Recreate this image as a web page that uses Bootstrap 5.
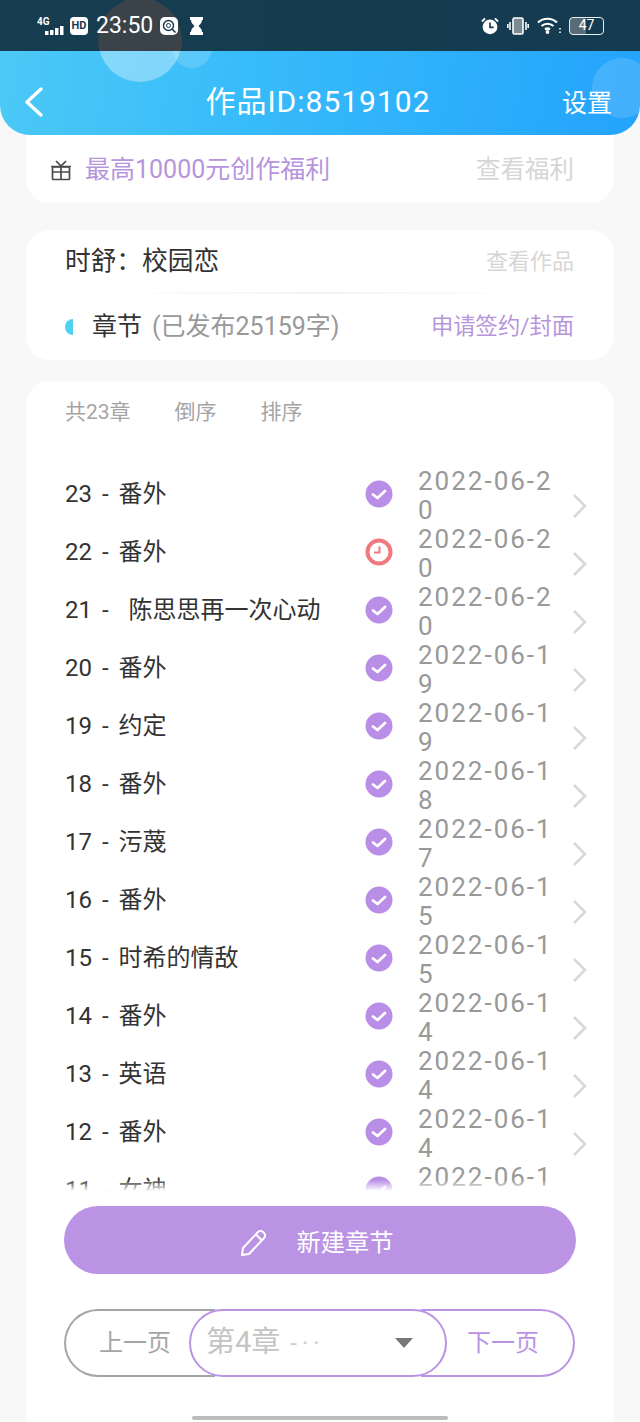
<!DOCTYPE html>
<html lang="zh">

<head>
  <meta charset="UTF-8">
  <meta name="viewport" content="width=device-width, initial-scale=1.0">
  <title>作品详情</title>
  <link href="https://cdn.jsdelivr.net/npm/bootstrap@5.3.3/dist/css/bootstrap.min.css" rel="stylesheet">
  <style>
    body {
      width: 640px;
      height: 1422px;
      overflow: hidden;
      background: #f8f8f8;
      font-family: Roboto, "Noto Sans CJK SC", sans-serif;
    }
    .top-wrap {
      height: 135px;
      overflow: hidden;
      border-radius: 0 0 30px 30px;
      background: linear-gradient(100deg, #4ccaf6 0%, #38bbfa 40%, #24a3fc 100%);
      z-index: 2;
    }
    .bubble {
      position: absolute;
      border-radius: 50%;
      background: rgba(255, 255, 255, .35);
    }
    .bubble-a { left: 98px; top: -2px; width: 84px; height: 84px; }
    .bubble-b { left: 172px; top: 28px; width: 40px; height: 40px; background: rgba(255, 255, 255, .16); }
    .bubble-c { left: 592px; top: 58px; width: 60px; height: 60px; background: rgba(255, 255, 255, .14); }
    .bubble-dim { background: rgba(255, 110, 40, .15); }
    .status-bar {
      height: 51px;
      padding: 0 36px 0 37px;
      overflow: hidden;
      background: rgba(20, 54, 72, .96);
      color: #fff;
    }
    .status-time { font-size: 23px; line-height: 1; margin: 0 3px 0 4px; }
    .hd-tag {
      width: 18px; height: 18px; border-radius: 4px; background: #fff; color: #17384b;
      font-size: 11px; font-weight: 700; line-height: 18px; text-align: center;
    }
    .batt {
      width: 35px; height: 18px; border: 1.5px solid #e8eef2; border-radius: 4px;
      font-size: 14px; line-height: 15px; text-align: center;
      background: linear-gradient(90deg, #5a6b78 47%, transparent 47%);
    }
    .head-bar { height: 84px; padding: 18px 28px 0 24px; color: #fff; }
    .head-side { flex: 0 0 70px; }
    .head-title { font-size: 30px; letter-spacing: 1px; line-height: 1; }
    .head-link { display: block; padding-top: 3px; font-size: 25px; line-height: 1; }
    .page-body { margin-top: -35px; padding: 0 26px; }
    .white-box { background: #fff; border-radius: 24px; }
    .box-gift { height: 103px; padding: 37px 40px 0 24px; }
    .gift-text { color: #b795dc; font-size: 25px; margin-left: 13px; }
    .faint-link { color: #d6d6d6; font-size: 24.500px; }
    .box-info { margin-top: 27px; height: 130px; padding: 0 40px 0 39px; }
    .info-top { height: 62px; }
    .info-name { font-size: 25.700px; color: #333; }
    .faint-small { color: #d6d6d6; font-size: 22px; }
    .info-rule {
      height: 2px; margin: 0 0 0 40px; width: 430px;
      background: linear-gradient(90deg, #fff, #f3f3f3 50%, #fff);
    }
    .half-dot {
      width: 8px; height: 16px; background: #4fd0f0;
      border-radius: 8px 0 0 8px; margin-right: 19px;
    }
    .info-sec { height: 65px; }
    .sec-name { font-size: 25px; color: #333; }
    .sec-count { font-size: 25px; color: #999; margin-left: 10px; }
    .sec-link { color: #b795dc; font-size: 22.300px; }
    .box-list { margin-top: 21px; height: 1060px; padding: 0 38px; border-radius: 24px 24px 0 0; }
    .list-head { height: 62px; padding: 2px 0 0 1px; color: #a5a5a5; font-size: 21px; gap: 44px; }
    .chapter-scroll { margin: 22px -26px 0 1px; height: 728px; overflow: hidden; }
    .chapter-fade {
      left: 0; right: 0; bottom: 0; height: 13px;
      background: linear-gradient(180deg, rgba(255, 255, 255, 0), #fff 85%);
    }
    .chapter-row { height: 58px; }
    .chapter-name { flex: 0 0 300px; font-size: 24px; color: #333; white-space: pre; word-spacing: 4px; }
    .chapter-mark { flex: 0 0 28px; height: 28px; }
    .chapter-date {
      flex: 0 0 140px; margin-left: 25px; padding-top: 4px; color: #999; font-size: 26px; line-height: 29px;
      word-break: break-all; letter-spacing: 2px;
    }
    .chapter-arrow { flex: 0 0 16px; height: 26px; margin: 24px 0 0 14px; }
    .new-btn {
      height: 68px; margin-top: 13px; width: 512px; padding: 6px 6px 0 0; border-radius: 34px; border: 0;
      background: #bb93e4; color: #fff; font-size: 24.300px; gap: 28px;
    }
    .new-btn:hover { background: #bb93e4; color: #fff; }
    .pager { margin-top: 35px; width: 511px; height: 68px; }
    .pager-side { height: 68px; background: #fff; font-size: 24px; border: 2px solid #a5a5a5; }
    .pager-prev { flex: 0 0 151px; border-radius: 34px 0 0 34px; border-right: 0; color: #a5a5a5; padding-left: 33px; }
    .pager-next { flex: 1 1 0; border-radius: 0 34px 34px 0; border-left: 0; color: #bb93e4; border-color: #bb93e4; padding-left: 46px; }
    .pager-pick {
      flex: 0 0 258px; height: 68px; margin: 0 -26px; background: #fff; z-index: 1;
      border: 2px solid #bb93e4; border-radius: 34px; padding: 0 32px 0 15px;
      color: #c4c4c4; font-size: 29px;
    }
    .pick-arrow {
      width: 0; height: 0; border-left: 9px solid transparent; border-right: 9px solid transparent;
      border-top: 10px solid #777;
    }
    .pick-more { font-size: 24px; letter-spacing: 5px; margin-left: 10px; color: #ccc; }
    .home-bar {
      left: 192px; bottom: 2px; width: 256px; height: 4px; border-radius: 2px; background: #bdbdbd;
    }
  </style>
</head>

<body class="position-relative">
  <div class="top-wrap position-relative">
    <span class="bubble bubble-a"></span>
    <span class="bubble bubble-b"></span>
    <span class="bubble bubble-c"></span>

    <div class="status-bar position-relative d-flex align-items-center justify-content-between">
      <span class="bubble bubble-a bubble-dim"></span>
      <div class="position-relative d-flex align-items-center gap-1">
        <svg width="29" height="20" viewBox="0 0 29 20" fill="#fff">
          <text x="0" y="9" font-family="Roboto, sans-serif" font-size="10" font-weight="700">4G</text>
          <rect x="8" y="15" width="3.500" height="4"/><rect x="13" y="14" width="3.500" height="5"/>
          <rect x="18" y="12" width="3.500" height="7"/><rect x="23" y="10" width="3.500" height="9"/>
        </svg>
        <span class="hd-tag">HD</span>
        <span class="status-time">23:50</span>
        <svg width="18" height="18" viewBox="0 0 18 18">
          <rect width="18" height="18" rx="5" fill="#fff"/>
          <circle cx="8.500" cy="8.500" r="5" fill="none" stroke="#17384b" stroke-width="1.400"/>
          <path d="M12 12l3.500 3.500" stroke="#17384b" stroke-width="1.600"/>
          <circle cx="8.500" cy="8.500" r="2" fill="none" stroke="#17384b"/>
        </svg>
        <svg class="ms-2" width="13" height="18" viewBox="0 0 13 18" fill="#fff">
          <path d="M0 0h13v3h-1c0 3-2 4.500-3.500 6C10 10.500 12 12 12 15h1v3H0v-3h1c0-3 2-4.500 3.500-6C3 7.500 1 6 1 3H0z"/>
        </svg>
      </div>
      <div class="d-flex align-items-center gap-1">
        <svg class="me-1" width="18" height="18" viewBox="0 0 20 20">
          <circle cx="10" cy="11" r="8.200" fill="#fff"/>
          <path d="M10 6v5.500h4" fill="none" stroke="#17384b" stroke-width="1.800"/>
          <path d="M1 5l3.500-3.500M19 5l-3.500-3.500" stroke="#fff" stroke-width="2"/>
        </svg>
        <svg class="me-1" width="22" height="18" viewBox="0 0 22 18" fill="none" stroke="#fff" stroke-width="1.600">
          <rect x="6" y="1" width="10" height="16" rx="1.500" fill="#7b8b96"/>
          <path d="M3 5v8M19 5v8M.8 7v4M21.200 7v4"/>
        </svg>
        <svg class="me-1" width="24" height="17" viewBox="0 0 24 17" fill="none" stroke="#fff" stroke-width="2.200">
          <path d="M1 5.500c5.500-5 13.500-5 19 0M4.500 9c3.500-3 8.500-3 12 0M8 12.500c1.500-1.200 3.500-1.200 5 0"/>
          <circle cx="10.500" cy="15" r=".8" fill="#fff"/>
          <path d="M23 11v1.500M23 14.500v1.500" stroke-width="1.600"/>
        </svg>
        <span class="batt">47</span>
      </div>
    </div>

    <div class="head-bar position-relative d-flex align-items-center justify-content-between">
      <div class="head-side">
        <svg class="d-block" width="20" height="32" viewBox="0 0 20 32" fill="none" stroke="#fff" stroke-width="3.400" stroke-linecap="round" stroke-linejoin="round">
          <path d="M17 3L3 16l14 13"/>
        </svg>
      </div>
      <span class="head-title">作品ID:8519102</span>
      <div class="head-side text-end"><span class="head-link">设置</span></div>
    </div>
  </div>

  <div class="page-body">
    <div class="white-box box-gift d-flex align-items-center justify-content-between">
      <div class="d-flex align-items-center">
        <svg width="22" height="22" viewBox="0 0 22 22" fill="none" stroke="#4a4a4a" stroke-width="1.700">
          <rect x="2.500" y="8" width="17" height="12.500" rx="1"/>
          <path d="M1 7.500h20M11 7.500v13M2.500 13h17M6 2l5 5 5-5"/>
        </svg>
        <span class="gift-text">最高10000元创作福利</span>
      </div>
      <span class="faint-link">查看福利</span>
    </div>

    <div class="white-box box-info">
      <div class="info-top d-flex align-items-center justify-content-between">
        <span class="info-name">时舒：校园恋</span>
        <span class="faint-small">查看作品</span>
      </div>
      <div class="info-rule"></div>
      <div class="info-sec d-flex align-items-center justify-content-between">
        <div class="d-flex align-items-center">
          <span class="half-dot"></span>
          <span class="sec-name">章节</span>
          <span class="sec-count">(已发布25159字)</span>
        </div>
        <span class="sec-link">申请签约/封面</span>
      </div>
    </div>

    <div class="white-box box-list">
      <div class="list-head d-flex align-items-center">
        <span>共23章</span><span>倒序</span><span>排序</span>
      </div>
      <div class="chapter-scroll position-relative">
        <div id="chapterList"></div>
        <div class="chapter-fade position-absolute"></div>
      </div>
      <button type="button" class="btn new-btn d-flex align-items-center justify-content-center">
        <svg width="28" height="28" viewBox="0 0 28 28" fill="none" stroke="#fff" stroke-width="2" stroke-linejoin="round">
          <path d="M2 26l1-7L18 3c1.500-1.500 3.500-1.500 5 0l1 1c1.500 1.500 1.500 3.500 0 5L9 25z"/>
          <path d="M16 5.500l6 6"/>
        </svg>
        <span>新建章节</span>
      </button>
      <div class="pager d-flex align-items-center">
        <div class="pager-side pager-prev d-flex align-items-center">上一页</div>
        <div class="pager-pick d-flex align-items-center justify-content-between">
          <span class="d-flex align-items-center">第4章<span class="pick-more">-··</span></span>
          <span class="pick-arrow"></span>
        </div>
        <div class="pager-side pager-next d-flex align-items-center">下一页</div>
      </div>
    </div>
  </div>

  <div class="home-bar position-absolute"></div>

  <script>
    const chapters = [
      ["23 - 番外", "2022-06-20", 1],
      ["22 - 番外", "2022-06-20", 0],
      ["21 -  陈思思再一次心动", "2022-06-20", 1],
      ["20 - 番外", "2022-06-19", 1],
      ["19 - 约定", "2022-06-19", 1],
      ["18 - 番外", "2022-06-18", 1],
      ["17 - 污蔑", "2022-06-17", 1],
      ["16 - 番外", "2022-06-15", 1],
      ["15 - 时希的情敌", "2022-06-15", 1],
      ["14 - 番外", "2022-06-14", 1],
      ["13 - 英语", "2022-06-14", 1],
      ["12 - 番外", "2022-06-14", 1],
      ["11 - 女神", "2022-06-14", 1]
    ];

    const okMark = `<svg class="chapter-mark" viewBox="0 0 28 28">
      <circle cx="14" cy="14" r="13.500" fill="#b98ee6"/>
      <path d="M8 14.500l4.500 3.500L20 11" fill="none" stroke="#fff" stroke-width="2.800" stroke-linecap="round" stroke-linejoin="round"/>
    </svg>`;
    const waitMark = `<svg class="chapter-mark" viewBox="0 0 28 28">
      <circle cx="14" cy="14" r="11.500" fill="#fff" stroke="#f0787f" stroke-width="4"/>
      <path d="M14.500 8.500v6H9" fill="none" stroke="#f0787f" stroke-width="2"/>
    </svg>`;
    const arrow = `<svg class="chapter-arrow" viewBox="0 0 16 26" fill="none" stroke="#d8d8d8" stroke-width="2.600">
      <path d="M2 2l11 11L2 24"/>
    </svg>`;

    document.getElementById("chapterList").innerHTML = chapters.map((c) => `
      <div class="chapter-row d-flex align-items-center">
        <div class="chapter-name">${c[0]}</div>
        ${c[2] ? okMark : waitMark}
        <div class="chapter-date">${c[1]}</div>
        ${arrow}
      </div>
    `).join('');
  </script>
  <script src="https://cdn.jsdelivr.net/npm/bootstrap@5.3.3/dist/js/bootstrap.bundle.min.js"></script>
</body>

</html>
